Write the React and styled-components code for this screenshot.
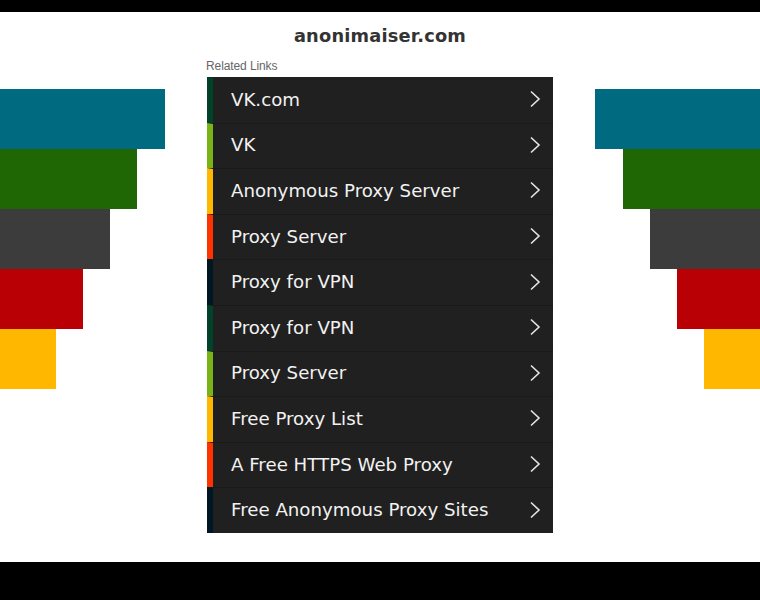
import styled, { createGlobalStyle } from 'styled-components'

const GlobalStyle = createGlobalStyle`
  html, body {
    margin: 0;
    padding: 0;
    background: #000;
  }
`

const Page = styled.div`
  height: 600px;
  display: flex;
  flex-direction: column;
  background: #000;
`

const Sheet = styled.div`
  margin-top: 12px;
  height: 550px;
  background: #fff;
  display: grid;
  grid-template-columns: 1fr 346px 1fr;
  column-gap: 42px;
  position: relative;
`

const Title = styled.h1`
  position: absolute;
  left: 0;
  right: 0;
  top: 13px;
  margin: 0;
  text-align: center;
  font-family: 'DejaVu Sans', sans-serif;
  font-weight: 700;
  font-size: 17.8px;
  color: #333;
  letter-spacing: 0.2px;
`

const Stairs = styled.div`
  padding-top: 77px;
  display: flex;
  flex-direction: column;
  align-items: ${p => (p.$right ? 'flex-end' : 'flex-start')};
`

const Step = styled.div`
  height: 60px;
  background: ${p => p.$color};
`

const Center = styled.div`
  padding-top: 45px;
  display: flex;
  flex-direction: column;
`

const Label = styled.div`
  font-family: 'Liberation Sans', sans-serif;
  font-size: 12px;
  line-height: 14px;
  padding-top: 2px;
  letter-spacing: -0.1px;
  color: #666;
  margin-left: -1px;
  height: 18px;
`

const List = styled.ul`
  list-style: none;
  margin: 0;
  padding: 0;
  background: #202020;
  width: 346px;
`

const Row = styled.li`
  height: 45.6px;
  box-sizing: border-box;
  display: flex;
  align-items: center;
  border-top: 1px solid ${p => (p.$first ? '#202020' : '#191919')};
  border-left: 6px solid ${p => p.$stripe};
  padding: 0 12px 2px 18px;
  color: #f2f2f2;
  font-family: 'DejaVu Sans', sans-serif;
  font-size: 18.2px;
  cursor: pointer;
`

const Text = styled.span`
  flex: 1;
`

const Chevron = () => (
  <svg width="12" height="18" viewBox="0 0 12 18">
    <path d="M2 1.5 L10 9 L2 16.5" fill="none" stroke="#e6e6e6" strokeWidth="1.6" />
  </svg>
)

const stripes = ['#00432a', '#7ab317', '#ffb700', '#ff3300', '#001824']

const links = [
  'VK.com',
  'VK',
  'Anonymous Proxy Server',
  'Proxy Server',
  'Proxy for VPN',
  'Proxy for VPN',
  'Proxy Server',
  'Free Proxy List',
  'A Free HTTPS Web Proxy',
  'Free Anonymous Proxy Sites',
]

const steps = [
  { color: '#006b80', w: 165 },
  { color: '#1f6705', w: 137 },
  { color: '#3c3c3c', w: 110 },
  { color: '#b80005', w: 83 },
  { color: '#ffb700', w: 56 },
]

function App() {
  return (
    <Page>
      <GlobalStyle />
      <Sheet>
        <Title>anonimaiser.com</Title>
        <Stairs>
          {steps.map(s => (
            <Step key={s.color} $color={s.color} style={{ width: s.w }} />
          ))}
        </Stairs>
        <Center>
          <Label>Related Links</Label>
          <List>
            {links.map((l, i) => (
              <Row key={i} $first={i === 0} $stripe={stripes[i % 5]}>
                <Text>{l}</Text>
                <Chevron />
              </Row>
            ))}
          </List>
        </Center>
        <Stairs $right>
          {steps.map(s => (
            <Step key={s.color} $color={s.color} style={{ width: s.w }} />
          ))}
        </Stairs>
      </Sheet>
    </Page>
  )
}

export default App
